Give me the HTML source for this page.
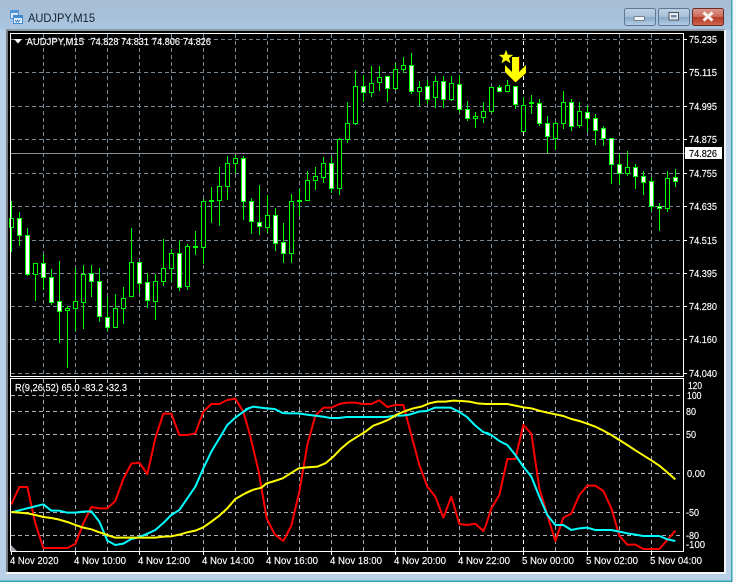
<!DOCTYPE html>
<html><head><meta charset="utf-8"><title>AUDJPY,M15</title>
<style>
html,body{margin:0;padding:0;width:736px;height:582px;overflow:hidden;background:#fff}
svg{display:block}
text{font-family:"Liberation Sans",sans-serif;font-size:10.5px;fill:#fff;stroke:#fff;stroke-width:.15px}
</style></head><body>
<svg width="736" height="582" viewBox="0 0 736 582" xmlns="http://www.w3.org/2000/svg">
<defs>
<linearGradient id="tb" x1="0" y1="0" x2="0" y2="1"><stop offset="0" stop-color="#a6bcd2"/><stop offset="1" stop-color="#a9c6e2"/></linearGradient>
<linearGradient id="bt" x1="0" y1="0" x2="0" y2="1"><stop offset="0" stop-color="#c0d2e4"/><stop offset=".48" stop-color="#a9c0d8"/><stop offset=".52" stop-color="#8aa9c8"/><stop offset="1" stop-color="#b4cfe6"/></linearGradient>
<linearGradient id="cl" x1="0" y1="0" x2="0" y2="1"><stop offset="0" stop-color="#dc9a8c"/><stop offset=".48" stop-color="#cc6a58"/><stop offset=".52" stop-color="#b53a26"/><stop offset="1" stop-color="#cf6a50"/></linearGradient>
</defs>
<!-- window frame -->
<rect width="736" height="582" fill="#f4f6f7"/>
<rect x="0" y="0" width="732" height="581" fill="#b9d1e8"/>
<rect x="0" y="0" width="732" height="30" fill="url(#tb)"/>
<rect x="731" y="0" width="1.5" height="582" fill="#3aa6b4"/>
<rect x="0" y="580.5" width="732" height="1.5" fill="#2fa8b0"/>
<rect x="6" y="29" width="719" height="2" fill="#8c99a6"/>
<rect x="6" y="30" width="3" height="543" fill="#777c82"/>
<rect x="8" y="31" width="716" height="541" fill="#000"/>
<rect x="6" y="572" width="720" height="2" fill="#f2f5f8"/>
<rect x="724" y="30" width="2" height="544" fill="#f2f5f8"/>

<!-- title -->
<rect x="10.5" y="10.5" width="8" height="8" fill="#d8e8f8" stroke="#4f93d8"/>
<rect x="10" y="10" width="9" height="3" fill="#4f93d8"/>
<rect x="13.5" y="15.5" width="9" height="8" fill="#eaf3fb" stroke="#3f88d2"/>
<rect x="13" y="15" width="10" height="3" fill="#3f88d2"/>
<path d="M15 20l1.5 2 1-2 1 2 2-2.500" fill="none" stroke="#2a6fb8" stroke-width=".8"/>
<text x="28" y="22" textLength="67" lengthAdjust="spacingAndGlyphs" style="font-size:12px;fill:#14202c;stroke:none">AUDJPY,M15</text>

<!-- buttons -->
<rect x="624.500" y="8.500" width="31" height="17" rx="2" fill="url(#bt)" stroke="#5f7892"/>
<rect x="634" y="16.500" width="10.500" height="4" rx="1" fill="#f2f4f6" stroke="#5a6a7c" stroke-width=".8"/>
<rect x="658.500" y="8.500" width="31" height="17" rx="2" fill="url(#bt)" stroke="#5f7892"/>
<rect x="669" y="12.500" width="9.500" height="7.500" fill="#e8edf2" stroke="#46525e"/>
<rect x="671" y="15" width="5.500" height="2.500" fill="#6f8aa6"/>
<rect x="692.500" y="8.500" width="31" height="17" rx="2" fill="url(#cl)" stroke="#6d2c2c"/>
<path d="M703.500 12.500l9 8M712.500 12.500l-9 8" stroke="#f6f0ee" stroke-width="3" fill="none"/>

<!-- main grid -->
<g shape-rendering="crispEdges" fill="none">
<path stroke="#778899" stroke-dasharray="4 3" d="M11 39.500H683M11 72.500H683M11 106.500H683M11 139.500H683M11 173.500H683M11 206.500H683M11 240.500H683M11 273.500H683M11 306.500H683M11 339.500H683M11 373.500H683"/>
<path stroke="#778899" stroke-dasharray="4 3" d="M43.500 34V376M75.500 34V376M107.500 34V376M139.500 34V376M171.500 34V376M203.500 34V376M235.500 34V376M267.500 34V376M299.500 34V376M331.500 34V376M363.500 34V376M395.500 34V376M427.500 34V376M459.500 34V376M491.500 34V376M555.500 34V376M587.500 34V376M619.500 34V376M651.500 34V376"/>
<path stroke="#fff" stroke-dasharray="4 3" d="M523.500 34V376"/>
<path stroke="#8a9098" d="M11 153.500H686"/>

<!-- wicks -->
<path stroke="#00ff00" d="M11.500 201V252M19.500 212V246M27.500 228V276M35.500 263V301M43.500 254V290M51.500 269V305M59.500 261V343M67.500 306V368M75.500 268V331M83.500 265V329M91.500 265V297M99.500 268V322M107.500 297V331M115.500 294V327M123.500 287V324M131.500 228V296M139.500 262V293M147.500 273V308M155.500 274V320M163.500 239V286M171.500 249V282M179.500 241V291M187.500 244V290M195.500 231V255M203.500 199V264M211.500 187V223M219.500 167V226M227.500 156V200M235.500 155V173M243.500 156V220M251.500 198V234M259.500 185V235M267.500 195V233M275.500 208V251M283.500 223V263M291.500 194V263M299.500 189V216M307.500 171V200M315.500 167V190M323.500 157V183M331.500 157V193M339.500 138V195M347.500 102V143M355.500 70V125M363.500 75V102M371.500 66V97M379.500 66V91M387.500 76V102M395.500 63V90M403.500 57V73M411.500 53V94M419.500 81V106M427.500 80V104M435.500 76V108M443.500 76V108M451.500 76V101M459.500 75V113M467.500 101V121M475.500 112V128M483.500 102V123M491.500 87V113M499.500 85V91M507.500 80V92M515.500 86V109M523.500 97V132M531.500 95V114M539.500 99V126M547.500 116V153M555.500 122V150M563.500 91V129M571.500 99V131M579.500 102V128M587.500 106V132M595.500 114V145M603.500 126V146M611.500 138V184M619.500 154V185M627.500 151V176M635.500 164V189M643.500 171V195M651.500 177V211M659.500 203V231M667.500 171V212M675.500 169V187"/>
<!-- hollow bodies -->
<path stroke="#00ff00" fill="#000" d="M9.500 218.500h4v9h-4zM33.500 263.500h4v11h-4zM65.500 308.500h4v2h-4zM73.500 301.500h4v7h-4zM81.500 274.500h4v28h-4zM113.500 308.500h4v19h-4zM121.500 298.500h4v10h-4zM129.500 262.500h4v34h-4zM153.500 281.500h4v20h-4zM161.500 268.500h4v13h-4zM169.500 253.500h4v15h-4zM185.500 246.500h4v40h-4zM201.500 201.500h4v46h-4zM217.500 186.500h4v14h-4zM225.500 163.500h4v23h-4zM233.500 158.500h4v5h-4zM265.500 215.500h4v12h-4zM289.500 201.500h4v52h-4zM305.500 180.500h4v20h-4zM313.500 176.500h4v4h-4zM321.500 163.500h4v14h-4zM337.500 139.500h4v49h-4zM345.500 123.500h4v16h-4zM353.500 86.500h4v37h-4zM369.500 83.500h4v9h-4zM377.500 77.500h4v5h-4zM393.500 69.500h4v19h-4zM401.500 65.500h4v4h-4zM417.500 87.500h4v4h-4zM433.500 81.500h4v16h-4zM449.500 83.500h4v16h-4zM473.500 116.500h4v2h-4zM481.500 111.500h4v6h-4zM489.500 87.500h4v24h-4zM505.500 85.500h4v6h-4zM521.500 105.500h4v26h-4zM553.500 123.500h4v15h-4zM561.500 102.500h4v21h-4zM577.500 111.500h4v14h-4zM625.500 167.500h4v6h-4zM665.500 178.500h4v30h-4z"/>
<!-- white bodies -->
<path stroke="#00ff00" fill="#fff" d="M17.500 218.500h4v17h-4zM25.500 235.500h4v39h-4zM41.500 263.500h4v14h-4zM49.500 277.500h4v25h-4zM57.500 301.500h4v10h-4zM89.500 273.500h4v8h-4zM97.500 281.500h4v35h-4zM105.500 317.500h4v10h-4zM137.500 262.500h4v21h-4zM145.500 282.500h4v18h-4zM177.500 253.500h4v34h-4zM241.500 158.500h4v43h-4zM249.500 201.500h4v20h-4zM257.500 222.500h4v4h-4zM273.500 215.500h4v28h-4zM281.500 242.500h4v11h-4zM329.500 163.500h4v25h-4zM361.500 86.500h4v6h-4zM385.500 76.500h4v12h-4zM409.500 65.500h4v26h-4zM425.500 86.500h4v13h-4zM441.500 81.500h4v18h-4zM457.500 84.500h4v25h-4zM465.500 109.500h4v9h-4zM497.500 87.500h4v4h-4zM513.500 86.500h4v18h-4zM537.500 103.500h4v20h-4zM545.500 123.500h4v13h-4zM569.500 102.500h4v24h-4zM585.500 112.500h4v6h-4zM593.500 118.500h4v12h-4zM601.500 128.500h4v10h-4zM609.500 138.500h4v26h-4zM617.500 164.500h4v9h-4zM633.500 167.500h4v9h-4zM641.500 176.500h4v6h-4zM649.500 181.500h4v25h-4zM657.500 206.500h4v2h-4zM673.500 177.500h4v4h-4z"/>
<!-- doji -->
<path stroke="#00ff00" stroke-width="2" d="M193 247h5M209 201h5M297 201h5M529 103h5"/>
</g>

<!-- star + arrow -->
<path d="M512 57h7v15l7-7v8l-10.500 9.500L505 72v-7l7 7z" fill="#ffff00"/>
<path d="M519.500 57v14" stroke="#700" stroke-width="1" fill="none"/>
<path d="M506 49l2.100 5.400 5.900.2-4.600 3.700 1.600 5.700-5-3.300-5 3.300 1.600-5.700-4.600-3.700 5.900-.2z" fill="#ffff00" stroke="#000" stroke-width=".6"/>

<!-- sub window grid -->
<g shape-rendering="crispEdges" fill="none">
<path stroke="#a9b0b8" stroke-dasharray="4 3" d="M11 395.500H683M11 411.500H683M11 434.500H683M11 473.500H683M11 512.500H683M11 535.500H683"/>
<path stroke="#a2a9b2" stroke-dasharray="4 3" d="M43.500 379V551M75.500 379V551M107.500 379V551M139.500 379V551M171.500 379V551M203.500 379V551M235.500 379V551M267.500 379V551M299.500 379V551M331.500 379V551M363.500 379V551M395.500 379V551M427.500 379V551M459.500 379V551M491.500 379V551M555.500 379V551M587.500 379V551M619.500 379V551M651.500 379V551"/>
<path stroke="#fff" stroke-dasharray="4 3" d="M523.500 379V551"/>
</g>
<polygon points="11,545 11,551 17,551" fill="#a0a0a8"/>

<!-- oscillator lines -->
<g fill="none" stroke-width="6" stroke-linejoin="round">
<g transform="translate(0,375) scale(.33333)">
<polyline stroke="#ff0000" points="34,388 58,336 82,336 106,445 130,519 154,519 178,519 202,519 226,507 250,445 274,396 298,400 322,400 346,378 370,312 394,266 418,263 442,297 466,190 490,116 514,116 538,180 562,180 586,175 610,110 634,87 658,87 682,75 706,71 730,110 750,180"/>
</g>
<g transform="translate(240,375) scale(.33333)">
<polyline stroke="#ff0000" points="30,180 56,290 80,430 104,478 130,498 154,452 178,350 202,210 226,122 250,98 274,98 298,87 322,83 346,83 370,87 394,87 418,76 442,96 466,90 490,90 514,180 538,270 562,335 586,365 610,428 634,365 658,447 682,450 706,446 730,468 738,450"/>
</g>
<g transform="translate(486,375) scale(.33333)">
<polyline stroke="#ff0000" points="0,450 16,400 40,360 64,252 88,252 112,150 136,176 160,340 184,420 208,498 232,428 256,416 280,360 304,332 328,332 352,348 376,400 400,482 424,509 448,509 472,522 496,522 520,522 544,495 568,467"/>
</g>
<g transform="translate(0,375) scale(.33333)">
<polyline stroke="#00ffff" points="34,412 58,406 82,400 106,394 130,388 154,407 178,407 202,413 226,413 250,410 274,409 298,440 322,497 346,510 370,506 394,492 418,486 442,476 466,465 490,444 514,420 538,405 562,370 586,335 610,280 634,230 658,190 682,150 706,128 730,110 750,98"/>
</g>
<g transform="translate(240,375) scale(.33333)">
<polyline stroke="#00ffff" points="16,103 40,95 56,97 80,100 104,102 128,114 152,115 176,115 200,119 224,122 248,125 272,129 296,129 320,126 344,126 368,126 392,126 416,126 440,126 464,122 488,122 512,118 536,110 560,108 584,98 608,98 632,98 656,110 680,125 704,150 728,170 750,180"/>
</g>
<g transform="translate(486,375) scale(.33333)">
<polyline stroke="#00ffff" points="0,172 16,180 40,198 64,210 88,240 112,275 136,305 160,365 184,420 208,450 232,450 256,465 280,460 304,458 328,465 352,465 376,465 400,470 424,475 448,479 472,483 496,483 520,483 544,493 568,498"/>
</g>
<g transform="translate(0,375) scale(.33333)">
<polyline stroke="#ffff00" points="34,411 58,413 82,415 106,420 130,426 154,429 178,434 202,441 226,450 250,458 274,463 298,472 322,480 346,488 370,488 394,488 418,488 442,488 466,488 490,485 514,484 538,479 562,472 586,467 610,457 634,440 658,422 682,400 706,372 730,358 750,348"/>
</g>
<g transform="translate(240,375) scale(.33333)">
<polyline stroke="#ffff00" points="16,355 40,344 64,338 80,325 104,318 128,310 152,295 176,280 200,277 232,275 256,265 280,245 304,220 328,200 352,185 376,170 400,152 424,143 448,133 472,118 496,108 520,100 544,95 568,85 592,80 616,80 640,77 664,78 688,80 712,85 738,87"/>
</g>
<g transform="translate(486,375) scale(.33333)">
<polyline stroke="#ffff00" points="0,87 64,87 88,92 112,97 136,100 160,107 184,113 208,118 232,123 256,132 280,138 304,146 328,155 352,167 376,180 400,195 424,210 448,226 472,241 496,256 520,272 544,292 568,313"/>
</g>
</g>

<!-- frames -->
<g shape-rendering="crispEdges" fill="none" stroke="#fff">
<path d="M10.500 377V33.500H683.500V377"/>
<path d="M10 376.500H684"/>
<path d="M10.500 551V378.500H683.500V551.500H10.500"/>
<path d="M684 39.500h3M684 72.500h3M684 106.500h3M684 139.500h3M684 173.500h3M684 206.500h3M684 240.500h3M684 273.500h3M684 306.500h3M684 339.500h3M684 373.500h3"/>
<path d="M11.500 552v3M75.500 552v3M139.500 552v3M203.500 552v3M267.500 552v3M331.500 552v3M395.500 552v3M459.500 552v3M523.500 552v3M587.500 552v3M651.500 552v3"/>
</g>

<!-- legend -->
<polygon points="14,39 22,39 18,43.500" fill="#fff"/>
<text x="26.500" y="45" textLength="57.500" lengthAdjust="spacingAndGlyphs">AUDJPY,M15</text>
<text x="90.500" y="45" textLength="28" lengthAdjust="spacingAndGlyphs">74.828</text>
<text x="121" y="45" textLength="28" lengthAdjust="spacingAndGlyphs">74.831</text>
<text x="152" y="45" textLength="28" lengthAdjust="spacingAndGlyphs">74.806</text>
<text x="183" y="45" textLength="28" lengthAdjust="spacingAndGlyphs">74.826</text>
<text x="15" y="391" textLength="112" lengthAdjust="spacingAndGlyphs">R(9,26,52) 65.0 -83.2 -32.3</text>

<!-- price axis -->
<g>
<text x="689" y="43" textLength="28" lengthAdjust="spacingAndGlyphs">75.235</text>
<text x="689" y="76" textLength="28" lengthAdjust="spacingAndGlyphs">75.115</text>
<text x="689" y="110" textLength="28" lengthAdjust="spacingAndGlyphs">74.995</text>
<text x="689" y="143" textLength="28" lengthAdjust="spacingAndGlyphs">74.875</text>
<text x="689" y="177" textLength="28" lengthAdjust="spacingAndGlyphs">74.755</text>
<text x="689" y="210" textLength="28" lengthAdjust="spacingAndGlyphs">74.635</text>
<text x="689" y="244" textLength="28" lengthAdjust="spacingAndGlyphs">74.515</text>
<text x="689" y="277" textLength="28" lengthAdjust="spacingAndGlyphs">74.395</text>
<text x="689" y="310" textLength="28" lengthAdjust="spacingAndGlyphs">74.280</text>
<text x="689" y="343" textLength="28" lengthAdjust="spacingAndGlyphs">74.160</text>
<text x="689" y="377" textLength="28" lengthAdjust="spacingAndGlyphs">74.040</text>
</g>
<rect x="685" y="147" width="37" height="12" fill="#fff"/>
<text x="689" y="157" textLength="28" lengthAdjust="spacingAndGlyphs" style="fill:#000;stroke:#000">74.826</text>

<!-- sub axis -->
<text x="688" y="389" textLength="14" lengthAdjust="spacingAndGlyphs">120</text>
<text x="687" y="399" textLength="14.500" lengthAdjust="spacingAndGlyphs">100</text>
<text x="686" y="415" textLength="10" lengthAdjust="spacingAndGlyphs">80</text>
<text x="686" y="438" textLength="10" lengthAdjust="spacingAndGlyphs">50</text>
<text x="687" y="477" textLength="18" lengthAdjust="spacingAndGlyphs">0.00</text>
<text x="686" y="516" textLength="13" lengthAdjust="spacingAndGlyphs">-50</text>
<text x="686" y="539" textLength="13" lengthAdjust="spacingAndGlyphs">-80</text>
<text x="686" y="548" textLength="19" lengthAdjust="spacingAndGlyphs">-100</text>

<!-- time axis -->
<text x="10" y="564" textLength="48.500" lengthAdjust="spacingAndGlyphs">4 Nov 2020</text>
<text x="74" y="564" textLength="52" lengthAdjust="spacingAndGlyphs">4 Nov 10:00</text>
<text x="138" y="564" textLength="52" lengthAdjust="spacingAndGlyphs">4 Nov 12:00</text>
<text x="202" y="564" textLength="52" lengthAdjust="spacingAndGlyphs">4 Nov 14:00</text>
<text x="266" y="564" textLength="52" lengthAdjust="spacingAndGlyphs">4 Nov 16:00</text>
<text x="330" y="564" textLength="52" lengthAdjust="spacingAndGlyphs">4 Nov 18:00</text>
<text x="394" y="564" textLength="52" lengthAdjust="spacingAndGlyphs">4 Nov 20:00</text>
<text x="458" y="564" textLength="52" lengthAdjust="spacingAndGlyphs">4 Nov 22:00</text>
<text x="522" y="564" textLength="52" lengthAdjust="spacingAndGlyphs">5 Nov 00:00</text>
<text x="586" y="564" textLength="52" lengthAdjust="spacingAndGlyphs">5 Nov 02:00</text>
<text x="650" y="564" textLength="52" lengthAdjust="spacingAndGlyphs">5 Nov 04:00</text>
</svg>
</body></html>
